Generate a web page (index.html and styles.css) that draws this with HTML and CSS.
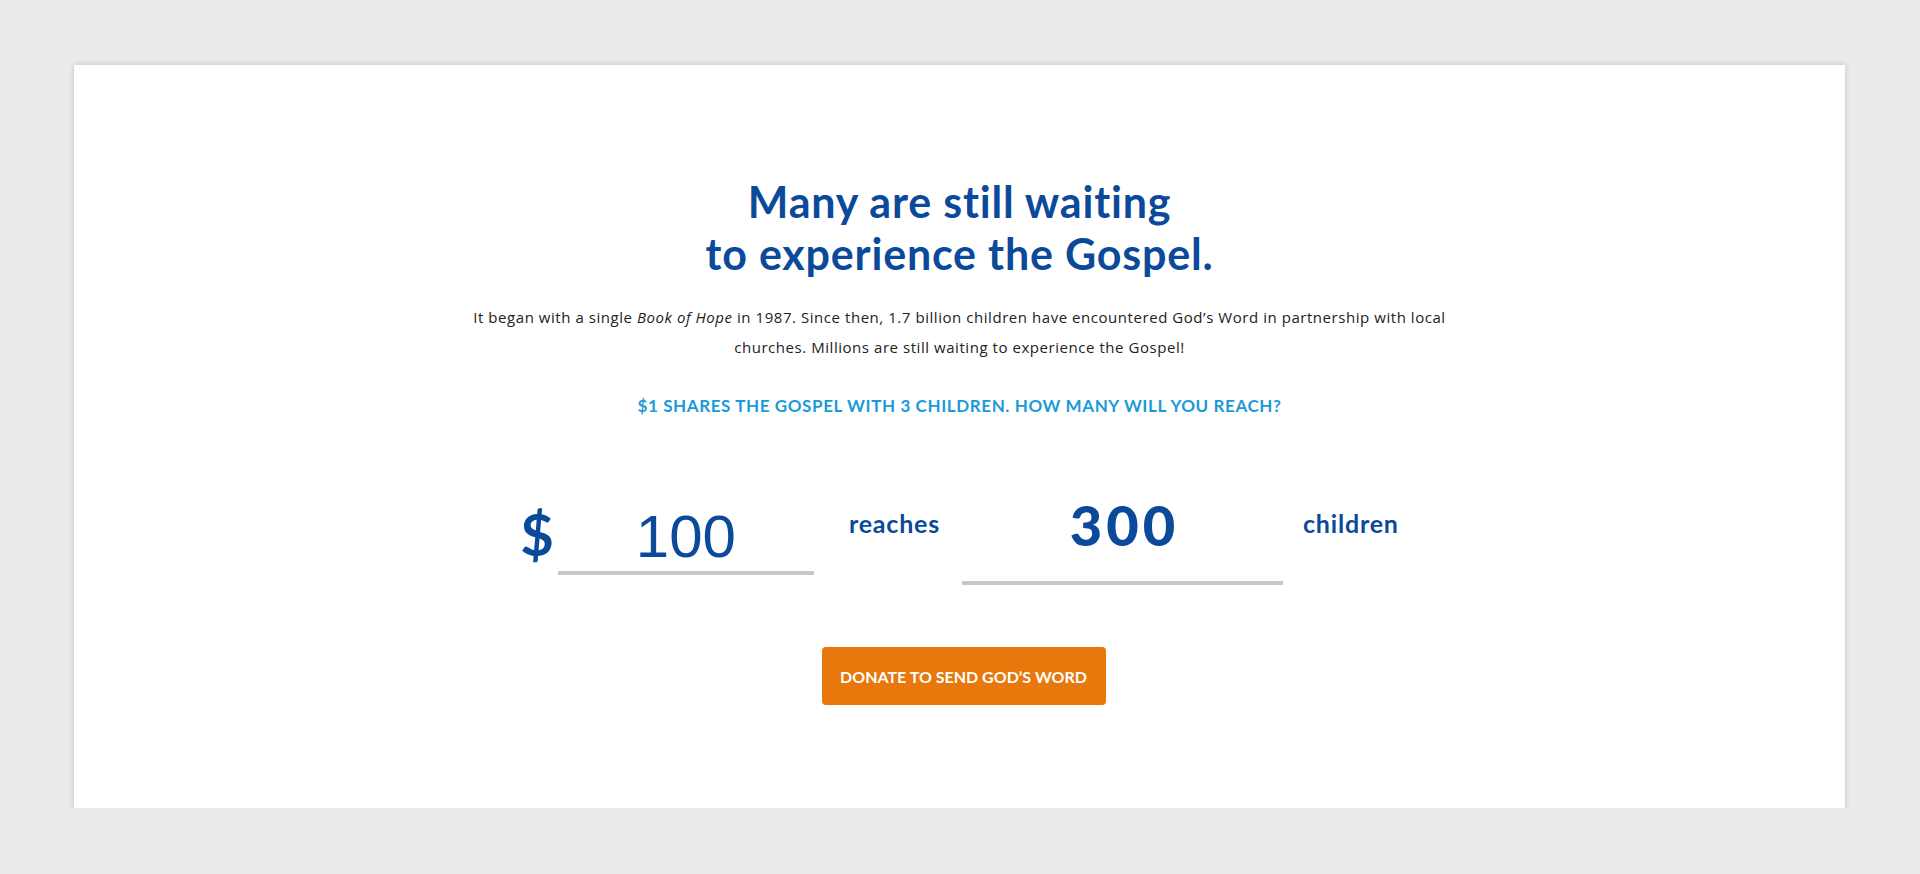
FILE: index.html
```html
<!DOCTYPE html>
<html lang="en">
<head>
<meta charset="UTF-8">
<meta name="viewport" content="width=device-width, initial-scale=1.0">
<title>Many are still waiting to experience the Gospel</title>
<link rel="stylesheet" href="styles.css">
</head>
<body>
<div class="card">
    <h1>Many are still waiting<br>to experience the Gospel.</h1>
    <p class="intro">It began with a single <em>Book of Hope</em> in 1987. Since then, 1.7 billion children have encountered God’s Word in partnership with local<br>churches. Millions are still waiting to experience the Gospel!</p>
    <p class="tagline">$1 shares the Gospel with 3 children. How many will you reach?</p>

    <div class="calc">
        <span class="dollar">$</span>
        <input class="amount" id="amount" type="text" value="100" oninput="updateReach()">
        <span class="word">reaches</span>
        <div class="reach" id="reach">300</div>
        <span class="word">children</span>
    </div>

    <button class="donate">Donate to send God’s Word</button>
</div>

<script>
    function updateReach() {
        let amount = parseFloat(document.getElementById('amount').value) || 0;
        document.getElementById('reach').textContent = Math.floor(amount * 3); // $1 = 3 children
    }
</script>
</body>
</html>
```

FILE: styles.css
```css
body {
    margin: 0;
    background-color: #ebebeb;
    font-family: Lato, "Open Sans", sans-serif;
}
.card {
    box-sizing: border-box;
    width: 1771px;
    height: 743px;
    margin: 65px 0 0 74px;
    padding-top: 111px;
    background-color: #fff;
    box-shadow: 0 0 6px rgba(0, 0, 0, 0.18);
    display: flex;
    flex-direction: column;
    align-items: center;
    text-align: center;
}
h1 {
    margin: 0;
    font-size: 43px;
    line-height: 52px;
    font-weight: 700;
    letter-spacing: 0.8px;
    color: #0b4a9a;
}
.intro {
    margin: 22px 0 0;
    font-family: "Open Sans", Lato, sans-serif;
    font-size: 15px;
    line-height: 30px;
    letter-spacing: 0.55px;
    color: #222;
}
.tagline {
    margin: 34px 0 0;
    font-size: 17px;
    line-height: 20px;
    font-weight: 700;
    letter-spacing: 0.6px;
    text-transform: uppercase;
    color: #1b9ad7;
}
.calc {
    margin-top: 74px;
    display: flex;
    align-items: flex-start;
}
.dollar {
    margin: 14px 4px 0 0;
    font-size: 58px;
    line-height: 60px;
    font-weight: 700;
    color: #0b4a9a;
}
.amount {
    box-sizing: content-box;
    width: 256px;
    height: 60px;
    margin: 16px 35px 0 0;
    padding: 0 0 5px;
    border: none;
    border-bottom: 4px solid #c8c8c8;
    outline: none;
    font-family: "Liberation Sans", Arial, sans-serif;
    font-size: 60px;
    color: #0b4a9a;
    text-align: center;
    background: transparent;
}
.word {
    margin-top: 18px;
    font-size: 25px;
    line-height: 30px;
    font-weight: 700;
    letter-spacing: 0.8px;
    color: #0b4a9a;
}
.reach {
    width: 321px;
    height: 60px;
    margin: 5px 20px 0 22px;
    padding-bottom: 26px;
    border-bottom: 4px solid #c8c8c8;
    font-size: 56px;
    line-height: 60px;
    font-weight: 900;
    letter-spacing: 4px;
    text-indent: 4px;
    color: #0b4a9a;
}
.donate {
    margin: 62px 0 0 8px;
    width: 284px;
    height: 58px;
    padding: 0;
    font-family: Lato, "Open Sans", sans-serif;
    font-size: 16px;
    font-weight: 700;
    text-transform: uppercase;
    color: #fff;
    background-color: #e8770c;
    border: none;
    border-radius: 4px;
    cursor: pointer;
}
.donate:hover {
    background-color: #d46a06;
}
```
